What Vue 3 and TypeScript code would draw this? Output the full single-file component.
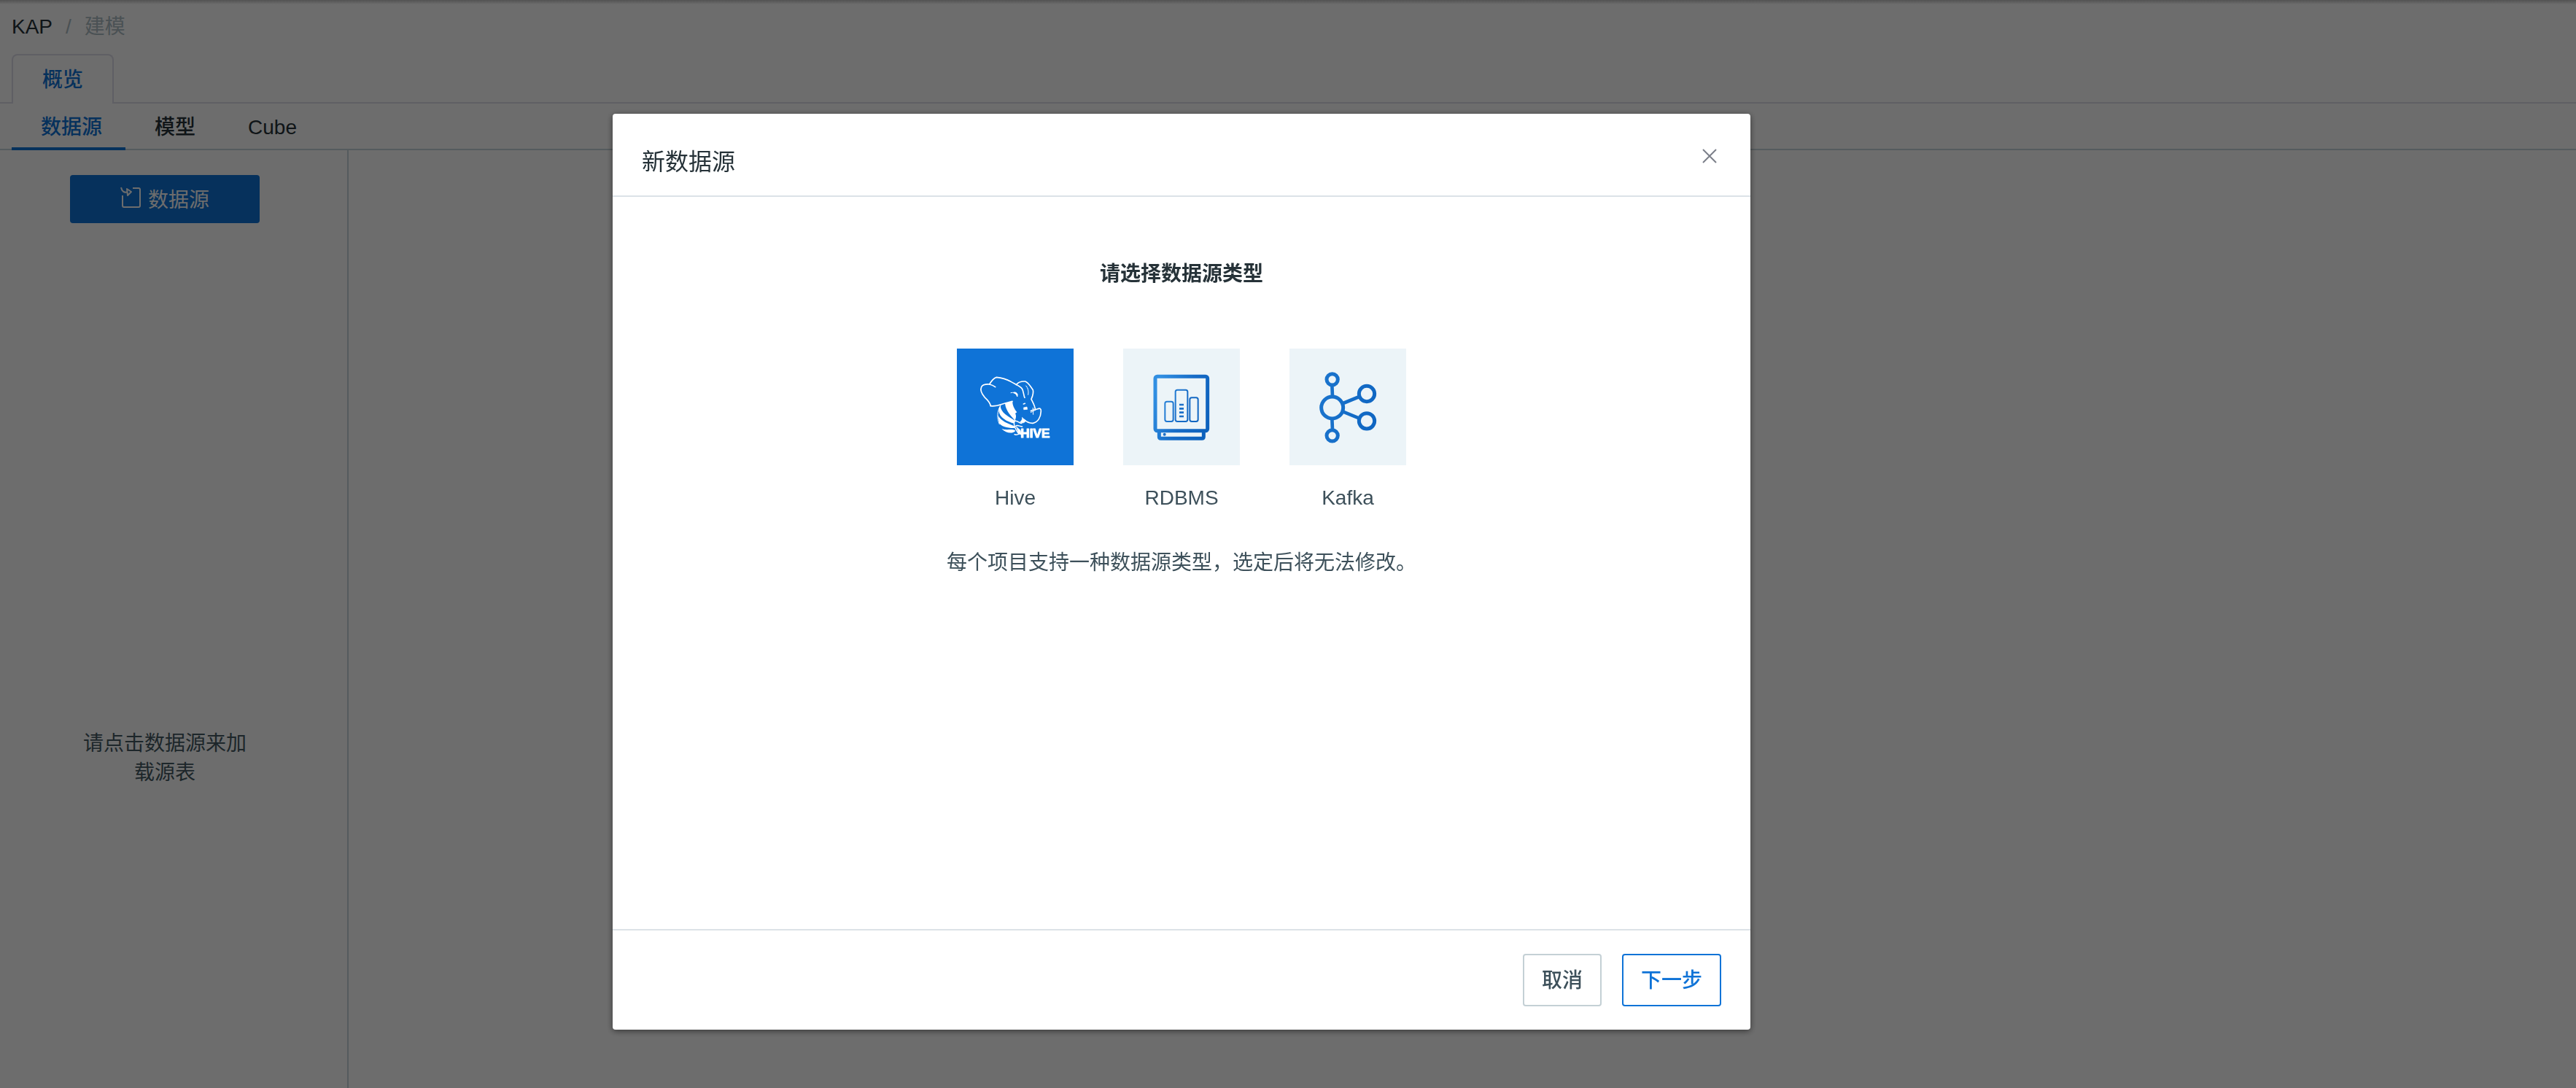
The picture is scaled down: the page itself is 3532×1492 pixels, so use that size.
<script setup lang="ts">
import { ref } from 'vue'

type SourceType = 'hive' | 'rdbms' | 'kafka'

const sources: { id: SourceType; label: string }[] = [
  { id: 'hive', label: 'Hive' },
  { id: 'rdbms', label: 'RDBMS' },
  { id: 'kafka', label: 'Kafka' },
]
const views: string[] = ['数据源', '模型', 'Cube']

const selected = ref<SourceType>('hive')
const activeView = ref('数据源')
const dialogOpen = ref(true)
</script>

<template>
  <div class="page">
    <nav class="breadcrumb" aria-label="breadcrumb">
      <a href="#">KAP</a>
      <span class="muted">/</span>
      <span class="muted">建模</span>
    </nav>

    <div class="card-tabs" role="tablist">
      <button class="card-tab" type="button" role="tab" aria-selected="true">概览</button>
    </div>

    <div class="line-tabs" role="tablist">
      <button
        v-for="view in views"
        :key="view"
        class="line-tab"
        :class="{ active: view === activeView }"
        type="button"
        role="tab"
        :aria-selected="view === activeView"
        @click="activeView = view"
      >{{ view }}</button>
    </div>

    <div class="workspace">
      <aside class="sidebar">
        <button class="load-button" type="button" @click="dialogOpen = true">
          <svg class="load-icon" viewBox="0 0 28 30" fill="none" stroke="currentColor" stroke-width="2" aria-hidden="true">
            <path d="M17 2h8q2 0 2 2v22q0 2-2 2H5q-2 0-2-2V12" />
            <path d="M1 1c1 5 4 8 9 6" />
            <path d="M9 3l6 4-5 5z" stroke-linejoin="round" />
          </svg>
          <span class="load-text">数据源</span>
        </button>
        <p class="empty">请点击数据源来加载源表</p>
      </aside>
      <main class="content"></main>
    </div>

    <div v-if="dialogOpen" class="overlay">
      <section class="dialog" role="dialog" aria-modal="true" aria-labelledby="dialog-title">
        <header class="dialog-header">
          <h1 id="dialog-title">新数据源</h1>
          <button class="close" type="button" aria-label="关闭" @click="dialogOpen = false">
            <svg viewBox="0 0 20 20" fill="none" stroke="currentColor" stroke-width="2" aria-hidden="true">
              <path d="M1 1l18 18M19 1L1 19" />
            </svg>
          </button>
        </header>

        <div class="dialog-body">
          <h2>请选择数据源类型</h2>
          <div class="sources" role="radiogroup" aria-label="数据源类型">
            <label v-for="source in sources" :key="source.id" class="source">
              <input v-model="selected" type="radio" name="source" :value="source.id" />
              <span class="tile" :class="{ selected: selected === source.id }">
                <svg v-if="source.id === 'hive'" viewBox="66 54 480 480" fill="none" stroke="currentColor" stroke-width="5" stroke-linecap="round" stroke-linejoin="round" aria-hidden="true">
                  <path d="M205 290C202 274 192 265 180 254C168 240 162 223 167 212C172 202 185 200 200 201C207 189 216 176 229 172C249 174 270 180 288 190C304 200 326 207 334 219C341 230 340 246 345 256" />
                  <path d="M200 201C209 203 217 207 224 212" />
                  <path d="M205 290C228 293 246 284 264 279L294 271" />
                  <path d="M310 203C318 192 329 188 347 189C361 194 369 211 379 224C382 236 378 249 372 262C378 275 386 287 388 303" />
                  <path d="M350 207C359 216 362 231 359 244" stroke-width="3" />
                  <path d="M288 236C299 233 309 235 314 251" stroke-width="3" />
                  <path d="M300 234C308 232 313 236 316 243L315 251C311 242 306 238 300 237z" fill="currentColor" stroke-width="2" />
                  <path d="M370 311C379 302 390 308 399 302C407 298 413 301 412 312C411 336 400 357 379 361C364 362 352 355 343 347" />
                  <path d="M379 298L380 325M370 317C378 310 386 310 391 306" stroke-width="3" />
                  <path d="M340 282L346 280" />
                  <path d="M341 297L354 294L356 304L342 305z" fill="currentColor" stroke-width="2" />
                  <path d="M246 288C231 310 230 341 241 365" stroke-width="3" />
                  <path d="M264 280L295 271C294 287 302 302 313 316L306 321C312 332 308 342 305 350C289 332 267 310 264 280z" fill="currentColor" stroke="none" />
                  <path d="M245 289C245 317 278 334 304 350L302 362C273 356 240 337 238 309C238 300 241 294 245 289z" fill="currentColor" stroke="none" />
                  <path d="M235 328C247 354 276 362 305 374L302 381C278 382 246 374 240 360z" fill="currentColor" stroke="none" />
                  <path d="M250 384C271 392 292 382 307 392C300 403 272 407 250 384z" fill="currentColor" stroke="none" />
                  <path d="M305 350C297 362 303 381 319 403M305 352C317 350 323 361 332 362M307 374C313 365 323 374 335 375M303 407C313 414 325 401 340 401" stroke-width="4" />
                  <path d="M311 376L327 390L331 409L319 402z" fill="currentColor" stroke-width="2" />
                  <path d="M335 338L350 351C342 362 333 362 326 356C333 350 335 346 335 338z" fill="currentColor" stroke-width="2" />
                  <text class="hive-word" x="449" y="421" text-anchor="end">HIVE</text>
                </svg>
                <svg v-else-if="source.id === 'rdbms'" viewBox="60 54 480 480" fill="none" stroke="url(#rdbms-blue)" aria-hidden="true">
                  <defs>
                    <linearGradient id="rdbms-blue" gradientUnits="userSpaceOnUse" x1="185" y1="250" x2="414" y2="330">
                      <stop offset="0" stop-color="#318fe2" />
                      <stop offset=".55" stop-color="#166bc6" />
                      <stop offset="1" stop-color="#0d62bd" />
                    </linearGradient>
                  </defs>
                  <path d="M208 392V417Q208 424 215 424H384Q391 424 391 417V392" stroke-width="15" />
                  <rect x="192" y="169" width="215" height="223" rx="8" stroke-width="15" />
                  <g stroke-width="6">
                    <rect x="232" y="272" width="34" height="82" rx="8" />
                    <rect x="275" y="224" width="50" height="130" rx="8" />
                    <rect x="334" y="256" width="34" height="98" rx="8" />
                  </g>
                  <path d="M291 285h18M291 301h18M291 317h18M291 333h18" stroke="#1c70c9" stroke-width="8" />
                  <circle cx="230" cy="407" r="6" fill="#1c70c9" stroke="none" />
                </svg>
                <svg v-else viewBox="54 54 480 480" fill="none" stroke="url(#kafka-blue)" stroke-width="15" aria-hidden="true">
                  <defs>
                    <linearGradient id="kafka-blue" gradientUnits="userSpaceOnUse" x1="178" y1="280" x2="410" y2="310">
                      <stop offset="0" stop-color="#1b74cd" />
                      <stop offset="1" stop-color="#0f66c2" />
                    </linearGradient>
                  </defs>
                  <circle cx="230" cy="297" r="45" />
                  <circle cx="230" cy="181" r="23" />
                  <circle cx="230" cy="412" r="23" />
                  <circle cx="372" cy="240" r="32" />
                  <circle cx="372" cy="352" r="32" />
                  <path d="M275 279L341 252M275 314L341 341M229 204L231 252M229 342L231 389" stroke-width="14" />
                </svg>
              </span>
              <span class="source-name">{{ source.label }}</span>
            </label>
          </div>
          <p class="hint">每个项目支持一种数据源类型，选定后将无法修改。</p>
        </div>

        <footer class="dialog-footer">
          <button class="action" type="button" @click="dialogOpen = false">取消</button>
          <button class="action primary" type="button">下一步</button>
        </footer>
      </section>
    </div>
  </div>
</template>

<style>
body {
  margin: 0;
}
</style>

<style scoped>
.page {
  box-sizing: border-box;
  display: flex;
  flex-direction: column;
  min-height: 100vh;
  background: linear-gradient(#c0c0c0, #fff 6px);
  color: #263238;
  font: 28px/40px "Liberation Sans", "Noto Sans CJK SC", sans-serif;
}

.page * {
  box-sizing: border-box;
}

button {
  margin: 0;
  font: inherit;
  color: inherit;
  cursor: pointer;
}

.breadcrumb {
  display: flex;
  gap: 18px;
  padding: 17px 16px;
}

.breadcrumb a {
  color: inherit;
  text-decoration: none;
}

.muted {
  color: #aebdc4;
}

.card-tabs {
  display: flex;
  padding-left: 16px;
  border-bottom: 2px solid #dfdeea;
}

.card-tab {
  height: 68px;
  margin-bottom: -2px;
  padding: 2px 40px 0;
  background: #fff;
  border: 2px solid #dfdeea;
  border-bottom: 0;
  border-radius: 8px 8px 0 0;
  color: #0f73d7;
  font-weight: 500;
}

.line-tabs {
  display: flex;
  padding-left: 16px;
  border-bottom: 2px solid #c8d5db;
}

.line-tab {
  height: 64px;
  margin-bottom: -2px;
  padding: 6px 32px 0 40px;
  background: none;
  border: 0;
  border-bottom: 4px solid transparent;
  font-weight: 500;
}

.line-tab.active {
  border-bottom-color: #0f73d7;
  color: #0f73d7;
}

.workspace {
  display: flex;
  flex: 1;
}

.sidebar {
  display: flex;
  flex-direction: column;
  align-items: center;
  width: 478px;
  padding: 34px 24px 0 0;
  border-right: 2px solid #c8d5db;
}

.content {
  flex: 1;
}

.load-button {
  display: flex;
  align-items: center;
  justify-content: center;
  gap: 10px;
  width: 260px;
  height: 66px;
  padding: 0;
  background: #0f73d7;
  border: 0;
  border-radius: 4px;
  color: #fff;
}

.load-icon {
  width: 28px;
  height: 30px;
  margin-bottom: 4px;
}

.load-text {
  padding-top: 4px;
}

.empty {
  width: 232px;
  margin: 694px 0 0;
  color: #455a64;
  text-align: center;
}

.overlay {
  position: fixed;
  inset: 0;
  display: flex;
  align-items: flex-start;
  justify-content: center;
  padding: 156px 292px 0 0;
  background: rgba(0, 0, 0, 0.573);
}

.dialog {
  width: 1560px;
  background: #fff;
  border-radius: 4px;
  box-shadow: 0 2px 8px rgba(0, 0, 0, 0.5);
}

.dialog-header {
  display: flex;
  align-items: flex-start;
  justify-content: space-between;
  height: 114px;
  padding: 42px 40px 0;
  border-bottom: 2px solid #dce2e7;
}

h1 {
  margin: 0;
  font-size: 32px;
  font-weight: 400;
  line-height: 48px;
}

.close {
  display: flex;
  padding: 6px;
  background: none;
  border: 0;
  color: #7b7f89;
}

.close svg {
  width: 20px;
  height: 20px;
}

.dialog-body {
  display: flex;
  flex-direction: column;
  align-items: center;
  min-height: 1004px;
  padding-top: 86px;
}

h2 {
  margin: 0;
  font-size: 28px;
  font-weight: 700;
}

.sources {
  display: flex;
  gap: 68px;
  margin-top: 82px;
}

.source {
  position: relative;
  display: flex;
  flex-direction: column;
  align-items: center;
  gap: 25px;
  cursor: pointer;
}

.source input {
  position: absolute;
  margin: 0;
  opacity: 0;
}

.tile {
  width: 160px;
  height: 160px;
  background: #ecf4f8;
}

.tile.selected {
  background: #0f73d7;
  color: #fff;
}

.tile svg {
  display: block;
  width: 160px;
  height: 160px;
}

.hive-word {
  fill: currentColor;
  stroke-width: 3px;
  font: 700 52px "Liberation Sans Narrow", "Liberation Sans", sans-serif;
}

.source-name,
.hint {
  color: #3d505a;
}

.hint {
  margin: 49px 0 0;
}

.dialog-footer {
  display: flex;
  justify-content: flex-end;
  gap: 28px;
  padding: 32px 40px;
  border-top: 2px solid #dce2e7;
}

.action {
  height: 72px;
  padding: 2px 24px 0;
  background: #fff;
  border: 2px solid #c4d0d5;
  border-radius: 4px;
  color: #3d505a;
  font-weight: 500;
}

.action.primary {
  border-color: #0f73d7;
  color: #0f73d7;
}
</style>
